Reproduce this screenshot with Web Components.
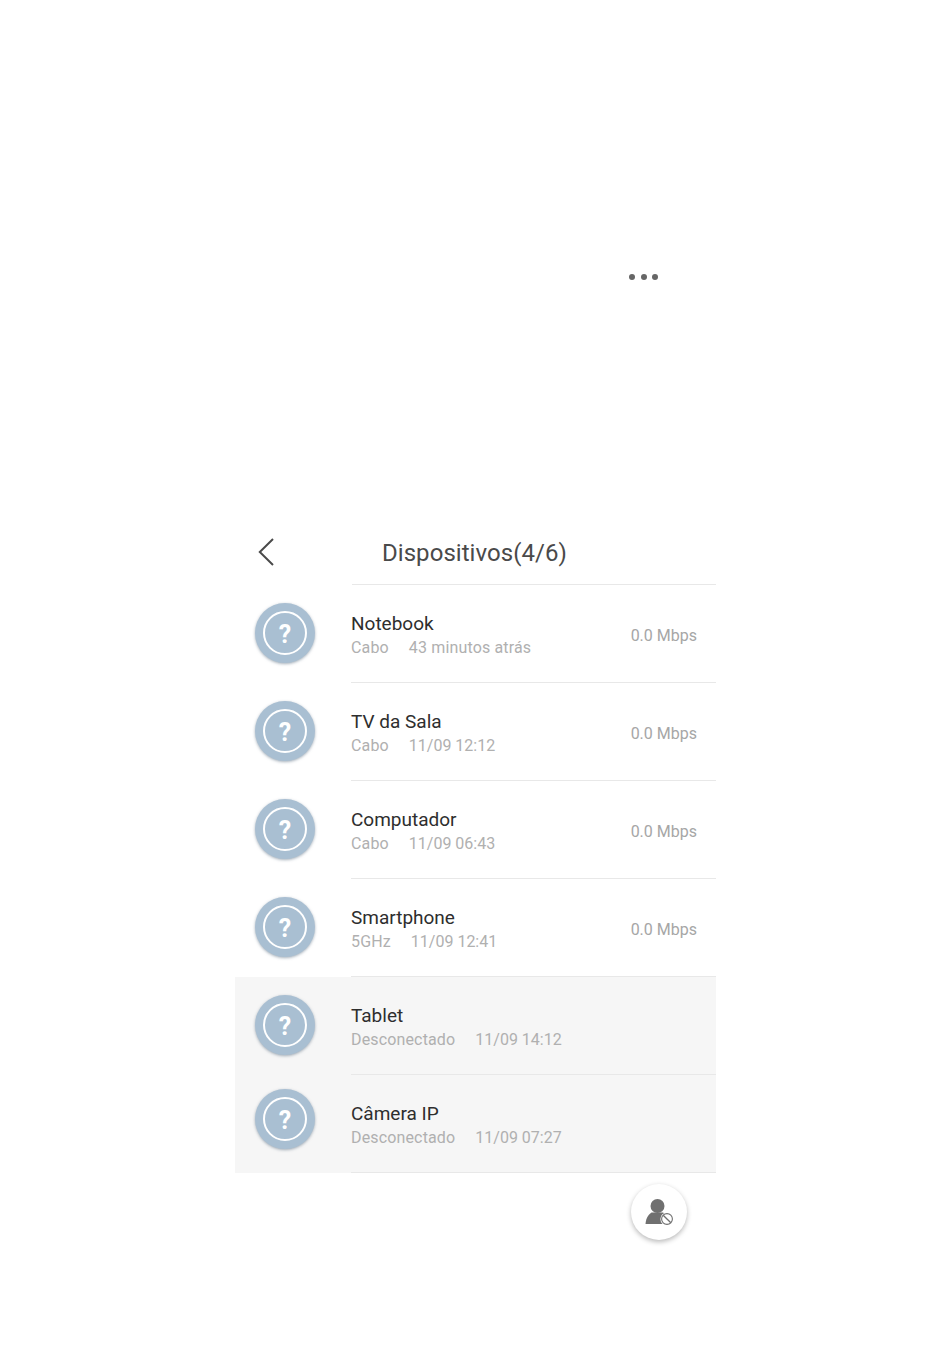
<!DOCTYPE html>
<html lang="pt">
<head>
<meta charset="utf-8">
<title>Dispositivos</title>
<style>
    html, body { margin: 0; padding: 0; background: #fff; }
    body { font-family: Roboto, "Liberation Sans", sans-serif; }
</style>
</head>
<body>
<tela-dispositivos>
    <linha-dispositivo style="--folga: .15px" nome="Notebook" tipo="Cabo" quando="43 minutos atrás" taxa="0.0 Mbps"></linha-dispositivo>
    <linha-dispositivo nome="TV da Sala" tipo="Cabo" quando="11/09 12:12" taxa="0.0 Mbps"></linha-dispositivo>
    <linha-dispositivo nome="Computador" tipo="Cabo" quando="11/09 06:43" taxa="0.0 Mbps"></linha-dispositivo>
    <linha-dispositivo nome="Smartphone" tipo="5GHz" quando="11/09 12:41" taxa="0.0 Mbps"></linha-dispositivo>
    <linha-dispositivo offline nome="Tablet" tipo="Desconectado" quando="11/09 14:12"></linha-dispositivo>
    <linha-dispositivo offline subido nome="Câmera IP" tipo="Desconectado" quando="11/09 07:27"></linha-dispositivo>
</tela-dispositivos>

<script>
class AvatarDispositivo extends HTMLElement{
    constructor(){
        super();
        this.attachShadow({mode: 'open'}).innerHTML = `
            <style>
                :host { display: block; width: 60px; height: 60px; }
                .disco {
                    box-sizing: border-box;
                    width: 60px;
                    height: 60px;
                    border-radius: 50%;
                    background: #a9bfd2;
                    box-shadow: 0 1px 3px rgba(90,110,130,.55);
                    display: flex;
                    align-items: center;
                    justify-content: center;
                }
                .anel {
                    box-sizing: border-box;
                    width: 44px;
                    height: 44px;
                    padding-top: 2px;
                    border: 2px solid #fff;
                    border-radius: 50%;
                    display: flex;
                    align-items: center;
                    justify-content: center;
                    color: #fff;
                    font: 700 25px Roboto, "Liberation Sans", sans-serif;
                }
            </style>
            <div class="disco"><div class="anel">?</div></div>
        `;
    }
}

class LinhaDispositivo extends HTMLElement{
    connectedCallback(){
        let taxa = this.getAttribute("taxa");
        this.shadowRoot.querySelector(".nome").textContent = this.getAttribute("nome");
        this.shadowRoot.querySelector(".tipo").textContent = this.getAttribute("tipo");
        this.shadowRoot.querySelector(".quando").textContent = this.getAttribute("quando");
        this.shadowRoot.querySelector(".taxa").textContent = taxa || "";
    }

    constructor(){
        super();
        this.attachShadow({mode: 'open'}).innerHTML = `
            <style>
                :host {
                    display: flex;
                    height: 98px;
                    box-sizing: border-box;
                    padding-left: 20px;
                    font-family: Roboto, "Liberation Sans", sans-serif;
                }
                :host([offline]) { background: #f6f6f6; }
                .icone {
                    width: 96px;
                    flex: none;
                    padding-top: 18px;
                }
                :host([subido]) .icone { padding-top: 14px; }
                .corpo {
                    flex: 1;
                    display: flex;
                    align-items: flex-start;
                    justify-content: space-between;
                    border-bottom: 1px solid #e8e8e8;
                    padding-right: 19px;
                }
                .nome {
                    font-size: 19px;
                    line-height: 24px;
                    color: #2e2e2e;
                    margin-top: 27px;
                }
                .sub {
                    display: flex;
                    gap: 20px;
                    font-size: 16px;
                    line-height: 24px;
                    color: #b0b0b0;
                }
                .tipo { letter-spacing: .15px; }
                .quando { letter-spacing: var(--folga, 0); }
                .taxa {
                    font-size: 16px;
                    line-height: 24px;
                    color: #a6a6a6;
                    margin-top: 39px;
                }
            </style>
            <div class="icone"><avatar-dispositivo></avatar-dispositivo></div>
            <div class="corpo">
                <div>
                    <div class="nome"></div>
                    <div class="sub"><span class="tipo"></span><span class="quando"></span></div>
                </div>
                <div class="taxa"></div>
            </div>
        `;
    }
}

class BotaoBloqueio extends HTMLElement{
    constructor(){
        super();
        this.attachShadow({mode: 'open'}).innerHTML = `
            <style>
                :host {
                    display: flex;
                    width: 56px;
                    height: 56px;
                    border-radius: 50%;
                    background: #fff;
                    box-shadow: 0 2px 5px rgba(0,0,0,.28);
                    align-items: center;
                    justify-content: center;
                }
            </style>
            <svg width="30" height="30" viewBox="0 0 30 30">
                <circle cx="13.5" cy="9" r="7" fill="#707070"/>
                <path d="M1.5 27 C2 21 4 18 7.5 15.5 L19 15.5 C22 17.5 24 21 24 27 Z" fill="#707070"/>
                <circle cx="23" cy="22" r="6.6" fill="#fff"/>
                <circle cx="23" cy="22" r="5.4" fill="#fff" stroke="#707070" stroke-width="1.1"/>
                <path d="M19.2 18.2 L26.8 25.8" stroke="#707070" stroke-width="1.3"/>
            </svg>
        `;
    }
}

class TelaDispositivos extends HTMLElement{
    constructor(){
        super();
        this.attachShadow({mode: 'open'}).innerHTML = `
            <style>
                :host {
                    display: block;
                    width: 481px;
                    margin-left: 235px;
                    font-family: Roboto, "Liberation Sans", sans-serif;
                }
                .pontos {
                    display: flex;
                    justify-content: flex-end;
                    gap: 5.5px;
                    padding: 274px 58px 0 0;
                    height: 258px;
                    box-sizing: content-box;
                }
                .pontos i {
                    width: 6px;
                    height: 6px;
                    border-radius: 50%;
                    background: #666;
                }
                header {
                    display: flex;
                    align-items: center;
                    height: 52px;
                    padding-bottom: 11px;
                    box-sizing: border-box;
                }
                .voltar { width: 147px; padding: 0 0 2px 22px; box-sizing: border-box; display: flex; }
                h1 {
                    margin: 0;
                    font-weight: 400;
                    font-size: 24px;
                    letter-spacing: .05px;
                    color: #4a4a4a;
                }
                .linha-topo { height: 1px; margin-left: 117px; background: #e8e8e8; }
                .rodape {
                    display: flex;
                    justify-content: flex-end;
                    padding: 11px 29.5px 60px 0;
                }
            </style>
            <div class="pontos"><i></i><i></i><i></i></div>
            <header>
                <div class="voltar">
                    <svg width="20" height="30" viewBox="0 0 20 30">
                        <path d="M16 2 L2.8 15 L16 28" fill="none" stroke="#4a4a4a" stroke-width="2"/>
                    </svg>
                </div>
                <h1>Dispositivos(4/6)</h1>
            </header>
            <div class="linha-topo"></div>
            <slot></slot>
            <div class="rodape"><botao-bloqueio></botao-bloqueio></div>
        `;
    }
}

customElements.define('avatar-dispositivo', AvatarDispositivo);
customElements.define('linha-dispositivo', LinhaDispositivo);
customElements.define('botao-bloqueio', BotaoBloqueio);
customElements.define('tela-dispositivos', TelaDispositivos);
</script>
</body>
</html>
